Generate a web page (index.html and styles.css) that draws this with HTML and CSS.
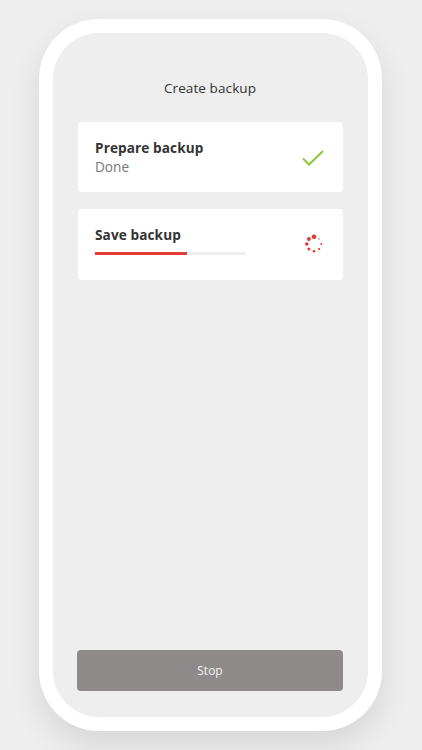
FILE: index.html
```html
<!DOCTYPE html>
<html>
<head>
<meta charset="utf-8">
<link rel="stylesheet" href="styles.css">
</head>
<body>
<div class="phone">
  <div class="screen">
    <h1 class="title">Create backup</h1>
    <div class="cards">
      <div class="card">
        <div class="card-text">
          <div class="card-title">Prepare backup</div>
          <div class="card-sub">Done</div>
        </div>
        <svg class="icon check" width="24" height="18" viewBox="0 0 24 18">
          <path d="M2 9.5 L8 15.5 L22 2" fill="none" stroke="#8dc63f" stroke-width="2"/>
        </svg>
      </div>
      <div class="card">
        <div class="card-text">
          <div class="card-title">Save backup</div>
          <div class="progress"><div class="progress-fill" style="width:61%"></div></div>
        </div>
        <svg class="icon spinner" width="20" height="20" viewBox="0 0 20 20">
          <circle cx="10" cy="2.8" r="2.3" fill="#e53935"/>
          <circle cx="4.9" cy="4.9" r="2.0" fill="#e53935"/>
          <circle cx="2.8" cy="10" r="1.8" fill="#e53935"/>
          <circle cx="4.9" cy="15.1" r="1.5" fill="#e53935"/>
          <circle cx="10" cy="17.2" r="1.3" fill="#e53935"/>
          <circle cx="15.1" cy="15.1" r="1.1" fill="#e53935"/>
          <circle cx="17.2" cy="10" r="0.9" fill="#e53935"/>
          <circle cx="15.1" cy="4.9" r="0.7" fill="#e53935"/>
        </svg>
      </div>
    </div>
    <button class="stop">Stop</button>
  </div>
</div>
</body>
</html>
```
FILE: styles.css
```css
html, body {
  margin: 0;
  padding: 0;
  background: #eeeeee;
  font-family: "Open Sans", "Noto Sans", sans-serif;
}
body {
  width: 422px;
  height: 750px;
  padding-top: 19px;
  padding-left: 39px;
  box-sizing: border-box;
}
.phone {
  width: 343px;
  height: 712px;
  box-sizing: border-box;
  padding: 14px;
  background: #ffffff;
  border-radius: 60px;
  box-shadow: 0 14px 30px rgba(0, 0, 0, 0.1);
}
.screen {
  height: 100%;
  background: #eeeeee;
  border-radius: 46px;
  display: flex;
  flex-direction: column;
  padding: 0 25px 26px 24px;
  box-sizing: border-box;
}
.title {
  margin: 44px 0 0;
  font-size: 13.5px;
  font-weight: 400;
  color: #333333;
  text-align: center;
  line-height: 22px;
  letter-spacing: 0.1px;
}
.cards {
  margin-top: 23px;
  display: flex;
  flex-direction: column;
  gap: 17px;
  padding-left: 1px;
}
.card {
  background: #ffffff;
  border-radius: 4px;
  height: 70px;
  display: flex;
  align-items: center;
  justify-content: space-between;
  padding: 0 18px 0 17px;
  box-sizing: border-box;
}
.card + .card {
  height: 71px;
  align-items: flex-start;
  padding-top: 16px;
}
.card + .card .spinner {
  margin-top: 9px;
}
.card-text {
  display: flex;
  flex-direction: column;
}
.card-title {
  font-size: 13.6px;
  font-weight: 700;
  color: #333333;
  line-height: 19px;
  letter-spacing: 0.1px;
}
.card-sub {
  font-size: 13.6px;
  color: #777777;
  line-height: 19px;
}
.progress {
  margin-top: 8px;
  width: 151px;
  height: 3px;
  background: #eeeeee;
}
.progress-fill {
  height: 100%;
  background: #e53935;
}
.icon {
  display: block;
}
.check {
  margin-top: 2px;
}
.spinner {
  margin-right: 1px;
}
.stop {
  margin-top: auto;
  height: 41px;
  width: 266px;
  border: none;
  border-radius: 4px;
  background: #8e8a89;
  color: #f2f2f2;
  font-family: "Open Sans", sans-serif;
  font-size: 12px;
}
```
